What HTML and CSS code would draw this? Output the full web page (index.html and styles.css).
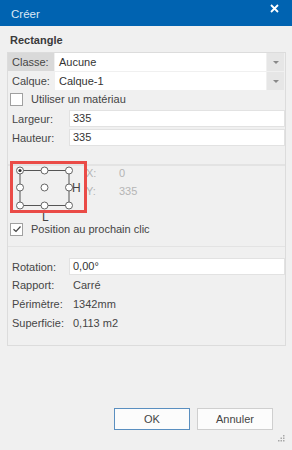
FILE: index.html
```html
<!DOCTYPE html>
<html lang="fr">
<head>
  <meta charset="UTF-8" />
  <title>Créer</title>
  <link rel="stylesheet" href="styles.css">
</head>
<body>

  <div class="titlebar">
    <span class="title">Créer</span>
    <svg class="close" width="9" height="9" viewBox="0 0 9 9">
      <path d="M1 1L8 8M8 1L1 8" stroke="#fff" stroke-width="1.8" fill="none"/>
    </svg>
  </div>

  <div class="heading">Rectangle</div>

  <div class="panel">
    <div class="select-row first">
      <div class="select-label active">Classe:</div>
      <div class="select-box">Aucune</div>
      <div class="select-btn"><span class="arrow"></span></div>
    </div>
    <div class="select-row">
      <div class="select-label">Calque:</div>
      <div class="select-box">Calque-1</div>
      <div class="select-btn"><span class="arrow"></span></div>
    </div>

    <div class="check-row">
      <span class="checkbox"></span>
      <span>Utiliser un matériau</span>
    </div>

    <div class="field-row first">
      <span class="field-label">Largeur:</span>
      <div class="field-input">335</div>
    </div>
    <div class="field-row">
      <span class="field-label">Hauteur:</span>
      <div class="field-input">335</div>
    </div>

    <div class="separator sep-top"></div>

    <div class="pos-area">
      <svg class="anchor-grid" width="70" height="46" viewBox="0 0 70 46">
        <g stroke="#555" stroke-width="1" fill="none">
          <path d="M12 4.5H61M12 39.5H61M12 4.5V39.5M61 4.5V39.5"/>
        </g>
        <g stroke="#666" stroke-width="1" fill="#fff">
          <circle cx="12" cy="4.5" r="3.5"/>
          <circle cx="36.5" cy="4.5" r="3.5"/>
          <circle cx="61" cy="4.5" r="3.5"/>
          <circle cx="12" cy="21.5" r="3.5"/>
          <circle cx="36.5" cy="21.5" r="3.5"/>
          <circle cx="61" cy="21.5" r="3.5"/>
          <circle cx="12" cy="39.5" r="3.5"/>
          <circle cx="36.5" cy="39.5" r="3.5"/>
          <circle cx="61" cy="39.5" r="3.5"/>
        </g>
        <circle cx="12" cy="4.5" r="1.6" fill="#333"/>
      </svg>
      <span class="dim-h">H</span>
      <span class="dim-l">L</span>
      <div class="coords">
        <div class="coord"><span class="coord-label">X:</span><span>0</span></div>
        <div class="coord"><span class="coord-label">Y:</span><span>335</span></div>
      </div>
      <div class="highlight"></div>
    </div>

    <div class="check-row pos-check">
      <span class="checkbox checked">
        <svg width="10" height="10" viewBox="0 0 10 10">
          <path d="M1.5 5.2L4 7.5L8.5 2.5" stroke="#444" stroke-width="1.2" fill="none"/>
        </svg>
      </span>
      <span>Position au prochain clic</span>
    </div>

    <div class="separator sep-bottom"></div>

    <div class="field-row rotation">
      <span class="field-label">Rotation:</span>
      <div class="field-input">0,00°</div>
    </div>
    <div class="info-row"><span class="field-label">Rapport:</span><span class="info-value">Carré</span></div>
    <div class="info-row"><span class="field-label">Périmètre:</span><span class="info-value">1342mm</span></div>
    <div class="info-row"><span class="field-label">Superficie:</span><span class="info-value">0,113 m2</span></div>
  </div>

  <div class="footer">
    <button class="btn btn-ok">OK</button>
    <button class="btn">Annuler</button>
  </div>

  <svg class="grip" width="7" height="7" viewBox="0 0 7 7">
    <g fill="#a8a8a8">
      <rect x="5" y="0" width="1.5" height="1.5"/>
      <rect x="2.5" y="2.5" width="1.5" height="1.5"/>
      <rect x="5" y="2.5" width="1.5" height="1.5"/>
      <rect x="0" y="5" width="1.5" height="1.5"/>
      <rect x="2.5" y="5" width="1.5" height="1.5"/>
      <rect x="5" y="5" width="1.5" height="1.5"/>
    </g>
  </svg>

</body>
</html>
```

FILE: styles.css
```css
body {
  font-family: 'Liberation Sans', Arial, sans-serif;
  font-size: 11px;
  margin: 0;
  padding: 0;
  width: 292px;
  height: 450px;
  background-color: #f0f0f0;
  color: #464646;
  position: relative;
  overflow: hidden;
}

.titlebar {
  height: 26px;
  background-color: #0063b1;
  display: flex;
  align-items: center;
  justify-content: space-between;
  padding: 0 13px 0 11px;
}

.title {
  color: #dce8f5;
  font-size: 11.5px;
  margin-top: 1px;
}

.close {
  margin-top: -10px;
}

.heading {
  height: 26px;
  line-height: 28px;
  padding-left: 10px;
  font-weight: bold;
  color: #3a3a3a;
}

.panel {
  margin: 0 6px 0 7px;
  border: 1px solid #dcdcdc;
  height: 292px;
}

/* dropdown rows */
.select-row {
  display: flex;
  height: 18px;
  margin-top: 1px;
}

.select-row.first {
  margin-top: 0;
}

.select-label {
  width: 42px;
  padding-left: 4px;
  line-height: 18px;
  margin-right: 1px;
}

.select-label.active {
  background-color: #d9d9d9;
}

.select-box {
  flex: 1;
  background-color: #fff;
  line-height: 18px;
  padding-left: 4px;
  color: #333;
}

.select-btn {
  width: 17px;
  margin-right: 1px;
  background-color: #e6e6e6;
  border-left: 1px solid #f0f0f0;
  display: flex;
  align-items: center;
  justify-content: center;
}

.arrow {
  width: 0;
  height: 0;
  border-left: 3px solid transparent;
  border-right: 3px solid transparent;
  border-top: 3px solid #888;
}

/* checkboxes */
.check-row {
  display: flex;
  align-items: center;
  height: 18px;
  padding-left: 2px;
  color: #444;
}

.checkbox {
  width: 11px;
  height: 11px;
  border: 1px solid #a0a0a0;
  background-color: #fff;
  margin-right: 8px;
  display: flex;
  align-items: center;
  justify-content: center;
}

/* text fields */
.field-row {
  display: flex;
  align-items: center;
  height: 17px;
  margin-top: 2px;
}

.field-label {
  width: 57px;
  padding-left: 4px;
  flex-shrink: 0;
}

.field-input {
  flex: 1;
  height: 15px;
  line-height: 15px;
  background-color: #fff;
  border: 1px solid #e2e2e2;
  padding-left: 3px;
  color: #333;
}

.separator {
  height: 2px;
  background-color: #e3e3e3;
}

.sep-top {
  margin-top: 18px;
}

/* anchor picker */
.pos-area {
  position: relative;
  height: 53px;
}

.anchor-grid {
  position: absolute;
  left: 0;
  top: 0;
}

.dim-h {
  position: absolute;
  left: 64px;
  top: 15px;
  font-size: 12px;
  color: #444;
}

.dim-l {
  position: absolute;
  left: 34px;
  top: 44px;
  font-size: 12px;
  color: #444;
}

.coords {
  position: absolute;
  left: 78px;
  top: 0;
  color: #b5b5b5;
}

.coord {
  display: flex;
  height: 18px;
  line-height: 14px;
}

.coord-label {
  width: 33px;
}

.highlight {
  position: absolute;
  left: 2px;
  top: -5px;
  width: 71px;
  height: 46px;
  border: 3px solid #ea4b47;
}

.pos-check {
  margin-top: 1px;
}

.sep-bottom {
  margin-top: 8px;
  height: 1px;
}

.field-row.rotation {
  margin-top: 11px;
}

.info-row {
  display: flex;
  align-items: center;
  height: 19px;
}

.info-row:first-of-type {
  margin-top: 1px;
}

.info-value {
  padding-left: 4px;
}

/* buttons */
.footer {
  display: flex;
  justify-content: flex-end;
  gap: 7px;
  margin-top: 62px;
  padding-right: 19px;
}

.btn {
  width: 76px;
  height: 22px;
  font-family: 'Liberation Sans', Arial, sans-serif;
  font-size: 11px;
  color: #444;
  background-color: #fcfcfc;
  border: 1px solid #cfcfcf;
  padding: 0;
}

.btn-ok {
  border-color: #5a8fc0;
}

.grip {
  position: absolute;
  right: 7px;
  bottom: 8px;
}
```
